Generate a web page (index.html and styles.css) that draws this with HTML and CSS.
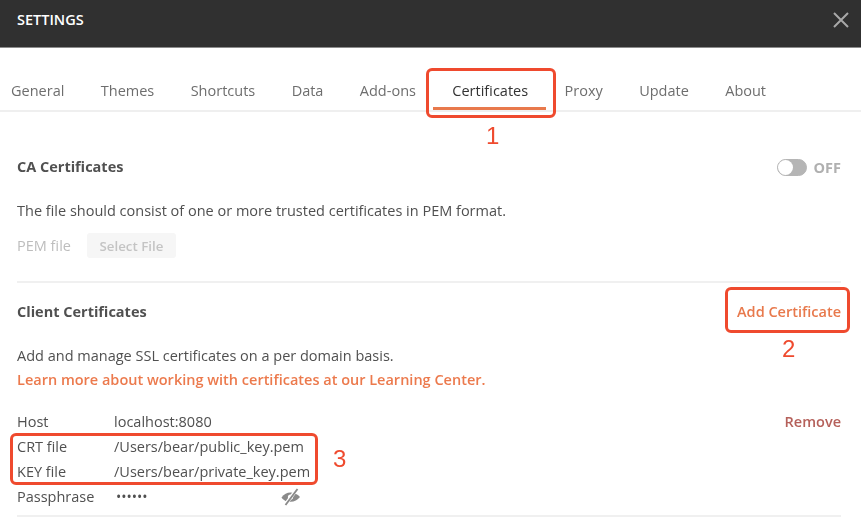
FILE: index.html
```html
<!DOCTYPE html>
<html lang="en">
<head>
<meta charset="utf-8">
<title>Settings</title>
<link rel="stylesheet" href="styles.css">
</head>
<body>
<div class="modal">
  <header class="titlebar">
    <span class="title">SETTINGS</span>
    <svg class="close" width="16" height="16" viewBox="0 0 16 16" aria-label="Close"><path d="M1 1L15 15M15 1L1 15" stroke="#a8a8a8" stroke-width="2" fill="none"/></svg>
  </header>
  <nav class="tabs">
    <span class="tab">General</span>
    <span class="tab">Themes</span>
    <span class="tab">Shortcuts</span>
    <span class="tab">Data</span>
    <span class="tab">Add-ons</span>
    <span class="tab active">Certificates</span>
    <span class="tab">Proxy</span>
    <span class="tab">Update</span>
    <span class="tab">About</span>
  </nav>
  <main class="content">
    <section class="ca">
      <div class="section-head">
        <h2>CA Certificates</h2>
        <div class="toggle-wrap"><span class="toggle"><span class="knob"></span></span><span class="off">OFF</span></div>
      </div>
      <p class="desc">The file should consist of one or more trusted certificates in PEM format.</p>
      <div class="pem"><span>PEM file</span><button class="select" type="button">Select File</button></div>
    </section>
    <section class="client">
      <div class="section-head">
        <h2>Client Certificates</h2>
        <a class="add">Add Certificate</a>
      </div>
      <p class="desc2">Add and manage SSL certificates on a per domain basis.</p>
      <a class="learn">Learn more about working with certificates at our Learning Center.</a>
      <div class="cert">
        <div class="row"><span class="key">Host</span><span class="val">localhost:8080</span><a class="remove">Remove</a></div>
        <div class="row"><span class="key">CRT file</span><span class="val">/Users/bear/public_key.pem</span></div>
        <div class="row"><span class="key">KEY file</span><span class="val">/Users/bear/private_key.pem</span></div>
        <div class="row"><span class="key">Passphrase</span><span class="val dots">••••••</span>
          <svg class="eye" width="22" height="18" viewBox="0 0 22 18" aria-label="Show"><path d="M1.5 9.5C4 6 7 4.500 10.500 4.500S17.500 6 20 9C17.500 12 14.500 13.800 10.500 13.800S4 12.800 1.500 9.500Z" fill="#8a8a8a"/><circle cx="10.500" cy="9" r="2.600" fill="#fff"/><path d="M17 1L5 17" stroke="#fff" stroke-width="3.500"/><path d="M17.500 1L5.500 17" stroke="#8a8a8a" stroke-width="1.800"/></svg>
        </div>
      </div>
    </section>
  </main>
</div>
<div class="mark mark-tab"></div>
<div class="mark mark-add"></div>
<div class="mark mark-files"></div>
<span class="num num1">1</span>
<span class="num num2">2</span>
<span class="num num3">3</span>
</body>
</html>
```

FILE: styles.css
```css
* { box-sizing: border-box; }
html, body { margin: 0; height: 100%; }
body {
  position: relative;
  width: 861px;
  height: 532px;
  overflow: hidden;
  background: #fff;
  color: #505050;
  font-family: "Open Sans", "Liberation Sans", sans-serif;
  font-size: 14.5px;
}
.modal { filter: blur(0.35px); height: 100%; }
.titlebar {
  height: 48px;
  background: #303030;
  border-bottom: 1px solid #8c8c8c;
  display: flex;
  align-items: center;
  justify-content: space-between;
  padding: 0 12px 7px 17px;
}
.title { color: #fff; font-size: 14.500px; font-weight: 600; line-height: 18px; }
.close { display: block; }
.tabs {
  height: 64px;
  display: flex;
  align-items: flex-end;
  padding-left: 11px;
  gap: 36.400px;
  border-bottom: 2px solid #efefef;
}
.tab {
  color: #6e6e6e;
  line-height: 20px;
  padding-bottom: 9px;
  white-space: nowrap;
}
.tab.active {
  color: #333;
  position: relative;
}
.tab.active::after {
  content: "";
  position: absolute;
  left: -19px;
  right: -18px;
  bottom: 0;
  height: 3px;
  background: #e8794c;
}
.content { padding: 0 20px 0 17px; }
.section-head {
  display: flex;
  justify-content: space-between;
  align-items: center;
  height: 20px;
}
h2 { margin: 0; color: #505050; font-size: 14.500px; font-weight: 700; line-height: 20px; }
.ca { padding-top: 45px; padding-bottom: 23px; border-bottom: 2px solid #f0f0f0; }
.toggle-wrap { display: flex; align-items: center; gap: 7px; }
.toggle {
  width: 30px; height: 17px; border-radius: 9px;
  background: #b5b5b5; display: block;
  border: 1px solid #b5b5b5;
}
.knob { display: block; width: 15px; height: 15px; border-radius: 50%; background: #fff; }
.off { color: #b0b0b0; font-size: 14.500px; font-weight: 700; }
.desc { margin: 24px 0 0; line-height: 20px; color: #505050; }
.pem {
  display: flex; align-items: center; gap: 16px;
  margin-top: 12px; color: #bdbdbd; line-height: 24px;
}
.select {
  height: 25px; width: 89px; padding: 0; border: 0; border-radius: 3px;
  background: #f6f6f6; color: #c4c4c4;
  font: 600 13.300px "Open Sans", "Liberation Sans", sans-serif;
}
.client { padding-top: 19px; padding-bottom: 6px; border-bottom: 2px solid #f0f0f0; }
.add { color: #e8794c; font-weight: 600; line-height: 20px; }
.desc2 { margin: 24px 0 0; line-height: 20px; }
.learn { display: block; color: #ec7a4d; font-weight: 600; line-height: 20px; margin-top: 4px; }
.cert { margin-top: 19px; }
.row { display: flex; align-items: center; height: 25px; }
.key { width: 97px; flex: none; }
.val { flex: 1; }
.dots { flex: none; width: 166px; padding-left: 2px; font-size: 14px; }
.eye { display: block; }
.remove { color: #b5605a; font-weight: 600; }
.mark {
  position: absolute;
  border: 3px solid #ef4a2e;
  border-radius: 6px;
}
.mark-tab { left: 426px; top: 68px; width: 130px; height: 50px; }
.mark-add { left: 725px; top: 287px; width: 125px; height: 46px; }
.mark-files { left: 10px; top: 433px; width: 308px; height: 52px; }
.num {
  position: absolute;
  color: #ef4a2e;
  font-family: "Liberation Sans", sans-serif;
  font-size: 24px;
  line-height: 24px;
}
.num1 { left: 486px; top: 124px; }
.num2 { left: 782px; top: 337px; }
.num3 { left: 333px; top: 447px; }
```
